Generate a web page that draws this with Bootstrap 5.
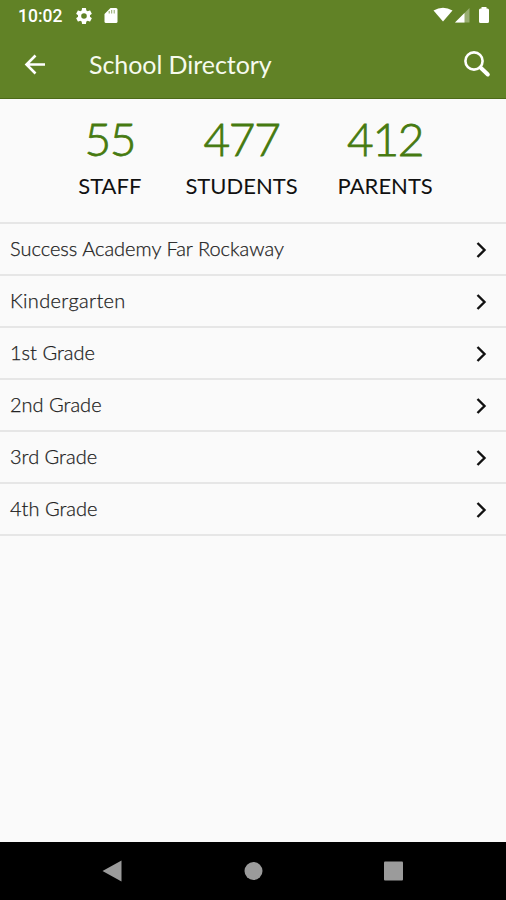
<!DOCTYPE html>
<html lang="en">
<head>
<meta charset="utf-8">
<meta name="viewport" content="width=device-width, initial-scale=1">
<title>School Directory</title>
<link href="https://cdn.jsdelivr.net/npm/bootstrap@5.3.0/dist/css/bootstrap.min.css" rel="stylesheet">
<style>
  body { font-family: Lato, sans-serif; background: #fafafa; color: #111; height: 900px; overflow: hidden; }
  svg { display: block; flex: none; }
  .app-top { background: #618226; border-bottom: 1px solid #4c6a17; height: 99px; color: #fff; }
  .status { height: 31px; padding: 0 15px 0 18px; font: 500 17.500px/31px Roboto, sans-serif; }
  .status > span { padding-top: 1px; }
  .gear { margin-left: 14px; }
  .sdcard { margin-left: 10px; }
  .toolbar { height: 67px; padding: 0 15px 0 24px; }
  .page-title { font-size: 25px; line-height: 30px; margin: -2px 0 0 43px; color: #f6faee; letter-spacing: -.06px; }
  .stats { height: 123px; padding: 12px 0 0 5px; }
  .stats > div + div { margin-left: 44px; }
  .stats > div + div + div { margin-left: 40px; }
  .figure-num { font-size: 46px; font-weight: 300; line-height: 56px; color: #467a10; letter-spacing: -1.300px; -webkit-text-stroke: .8px #467a10; }
  .figure-label { font-size: 22px; line-height: 28px; margin-top: 5px; color: #111; }
  .rows { border-top: 2px solid #e6e6e6; }
  .rows .list-group-item { height: 52px; padding: 0 18px 2px 10px; background: transparent; border-color: #e6e6e6; border-width: 0 0 2px; color: #222; font-size: 20px; font-weight: 300; line-height: 24px; -webkit-text-stroke: .25px #222; }
  .rows .list-group-item:last-child { border-bottom-width: 2px; }
  .rows .spaced { letter-spacing: .35px; }
  .rows svg { margin-top: 3px; }
  .sysnav { height: 58px; background: #000; padding: 0 102px; }
</style>
<script src="https://cdn.jsdelivr.net/npm/bootstrap@5.3.0/dist/js/bootstrap.bundle.min.js"></script>
</head>
<body class="d-flex flex-column">
<header class="app-top flex-shrink-0">
  <div class="status d-flex align-items-center">
    <span>10:02</span>
    <svg class="ms-auto order-2" width="58" height="18" viewBox="0 0 58 18" fill="#fff">
      <path d="M.5 3.500Q10 -2 19.500 3.500L10 14.500z"/>
      <path d="M22 15.500L36.500 1V15.500z" opacity=".35"/>
      <path d="M22 15.500L31.500 6V15.500z"/>
      <path d="M48.500 0h5v1.500h1q1.500 0 1.500 1.500v11.500q0 1.500-1.500 1.500h-7q-1.500 0-1.500-1.500V3q0-1.500 1.500-1.500h1z"/>
    </svg>
    <svg class="gear" width="16" height="16" viewBox="2 2 20 20" fill="#fff"><path d="M19.430 12.980c.04-.32.07-.64.07-.98s-.03-.66-.07-.98l2.110-1.650c.19-.15.24-.42.12-.64l-2-3.460c-.12-.22-.39-.3-.61-.22l-2.490 1c-.52-.4-1.080-.73-1.690-.98l-.38-2.650A.488.488 0 0 0 14 2h-4c-.25 0-.46.18-.49.42l-.38 2.650c-.61.25-1.170.59-1.690.98l-2.490-1c-.23-.09-.49 0-.61.22l-2 3.460c-.13.22-.07.49.12.64l2.110 1.650c-.04.32-.07.65-.07.98s.03.66.07.98l-2.110 1.650c-.19.15-.24.42-.12.64l2 3.460c.12.22.39.3.61.22l2.490-1c.52.4 1.080.73 1.690.98l.38 2.650c.03.24.24.42.49.42h4c.25 0 .46-.18.49-.42l.38-2.650c.61-.25 1.170-.59 1.690-.98l2.490 1c.23.09.49 0 .61-.22l2-3.460c.12-.22.07-.49-.12-.64zM12 15.500a3.500 3.500 0 1 1 0-7 3.500 3.500 0 0 1 0 7z"/></svg>
    <svg class="sdcard" width="19" height="18" viewBox="0 0 19 18"><path d="M8.500 1H14q1.500 0 1.500 1.500v12q0 1.500-1.500 1.500H4q-1.500 0-1.500-1.500V7z" fill="#fff"/><path d="M7.200 4v2.500M9.700 3v3.500M12.200 3v3.500" stroke="#8fa768" stroke-width="1"/></svg>
  </div>
  <div class="toolbar d-flex align-items-center">
    <svg width="22" height="22" viewBox="0 0 22 22" fill="none" stroke="#fff" stroke-width="2.600"><path d="M21 10.500H3M11.500 1.500L2.500 10.500L11.500 19.500"/></svg>
    <h1 class="page-title fw-normal">School Directory</h1>
    <svg class="ms-auto" width="28" height="28" viewBox="0 0 28 28" fill="none" stroke="#fff"><circle cx="11" cy="10" r="8.600" stroke-width="2.600"/><path d="M17.500 16.500L24.800 23.500" stroke-width="4" stroke-linecap="round"/></svg>
  </div>
</header>
<main class="flex-grow-1">
  <section class="stats d-flex justify-content-center text-center">
    <div><div class="figure-num">55</div><div class="figure-label">STAFF</div></div>
    <div><div class="figure-num">477</div><div class="figure-label">STUDENTS</div></div>
    <div><div class="figure-num">412</div><div class="figure-label">PARENTS</div></div>
  </section>
  <div class="rows list-group list-group-flush">
    <a class="list-group-item d-flex align-items-center justify-content-between">Success Academy Far Rockaway<svg width="14" height="18" viewBox="0 0 14 18" fill="none" stroke="#111" stroke-width="2.400"><path d="M3.500 2L10.500 9L3.500 16"/></svg></a>
    <a class="list-group-item spaced d-flex align-items-center justify-content-between">Kindergarten<svg width="14" height="18" viewBox="0 0 14 18" fill="none" stroke="#111" stroke-width="2.400"><path d="M3.500 2L10.500 9L3.500 16"/></svg></a>
    <a class="list-group-item d-flex align-items-center justify-content-between">1st Grade<svg width="14" height="18" viewBox="0 0 14 18" fill="none" stroke="#111" stroke-width="2.400"><path d="M3.500 2L10.500 9L3.500 16"/></svg></a>
    <a class="list-group-item d-flex align-items-center justify-content-between">2nd Grade<svg width="14" height="18" viewBox="0 0 14 18" fill="none" stroke="#111" stroke-width="2.400"><path d="M3.500 2L10.500 9L3.500 16"/></svg></a>
    <a class="list-group-item d-flex align-items-center justify-content-between">3rd Grade<svg width="14" height="18" viewBox="0 0 14 18" fill="none" stroke="#111" stroke-width="2.400"><path d="M3.500 2L10.500 9L3.500 16"/></svg></a>
    <a class="list-group-item d-flex align-items-center justify-content-between">4th Grade<svg width="14" height="18" viewBox="0 0 14 18" fill="none" stroke="#111" stroke-width="2.400"><path d="M3.500 2L10.500 9L3.500 16"/></svg></a>
  </div>
</main>
<footer class="sysnav d-flex align-items-center justify-content-between flex-shrink-0">
  <svg width="20" height="22" viewBox="0 0 20 22" fill="#9b9b9b"><path d="M.5 11L19.500 .5V21.500z"/></svg>
  <svg width="20" height="20" viewBox="0 0 20 20" fill="#9b9b9b"><circle cx="10.500" cy="10" r="9"/></svg>
  <svg width="20" height="20" viewBox="0 0 20 20" fill="#9b9b9b"><rect x="0" y=".5" width="19" height="19" rx="1"/></svg>
</footer>
</body>
</html>
